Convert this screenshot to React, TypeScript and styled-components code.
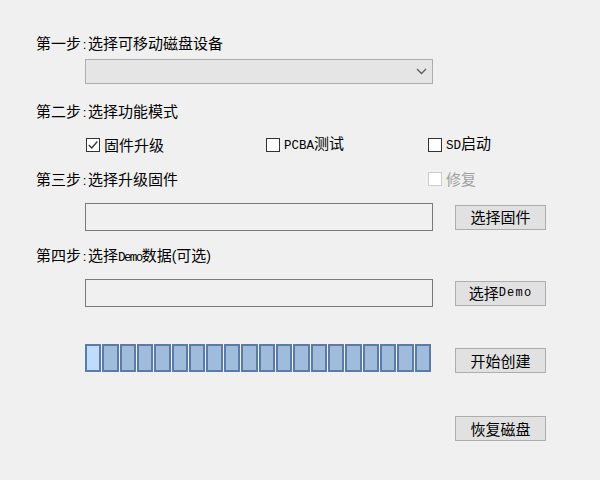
import React from "react";
import styled, { createGlobalStyle } from "styled-components";

const Global = createGlobalStyle`
  html, body { margin: 0; padding: 0; background: #f0f0f0; }
  body { width: 600px; height: 480px; overflow: hidden; }
`;

const Window = styled.div`
  width: 600px;
  height: 480px;
  box-sizing: border-box;
  padding: 35px 0 0 36px;
  display: flex;
  flex-direction: column;
  font-family: "Noto Sans CJK SC", "Noto Sans", sans-serif;
  font-size: 15px;
  line-height: 16px;
  color: #000;
  background: #f0f0f0;
`;

const Row = styled.div<{ $top: number; $indent?: number; $align?: string }>`
  display: flex;
  align-items: ${(p) => p.$align ?? "center"};
  margin-top: ${(p) => p.$top}px;
  padding-left: ${(p) => p.$indent ?? 0}px;
`;

const Label = styled.div<{ $width?: number }>`
  height: 16px;
  white-space: nowrap;
  ${(p) => (p.$width ? `width: ${p.$width}px;` : "")}
`;

const Lat = styled.span<{ $size: number; $ls?: number }>`
  font-family: "Liberation Mono", "DejaVu Sans Mono", monospace;
  font-size: ${(p) => p.$size}px;
  letter-spacing: ${(p) => p.$ls ?? 0}px;
`;

const Colon = styled.span`
  display: inline-block;
  width: 7px;
  text-align: center;
  font-family: "Liberation Sans", sans-serif;
  font-size: 13px;
`;

const Paren = styled.span`
  font-family: "Liberation Sans", sans-serif;
  font-size: 14px;
`;

const Combo = styled.div`
  width: 348px;
  height: 25px;
  box-sizing: border-box;
  border: 1px solid #adadad;
  background: #e5e5e5;
  display: flex;
  align-items: center;
  justify-content: flex-end;
  padding-right: 5px;
`;

const TextBox = styled.div`
  width: 348px;
  height: 28px;
  box-sizing: border-box;
  border: 1px solid #7a7a7a;
  background: #f0f0f0;
`;

const Button = styled.div<{ $gap?: number; $drop?: number }>`
  width: 91px;
  height: 25px;
  box-sizing: border-box;
  border: 1px solid #adadad;
  background: #e1e1e1;
  display: flex;
  align-items: center;
  justify-content: center;
  margin-left: ${(p) => p.$gap ?? 22}px;
  margin-top: ${(p) => p.$drop ?? 0}px;
  white-space: nowrap;
`;

const CheckGrid = styled.div`
  display: grid;
  grid-template-columns: 180px 162px auto;
  align-items: center;
`;

const Check = styled.div<{ $disabled?: boolean }>`
  display: flex;
  align-items: center;
  gap: 4px;
  color: ${(p) => (p.$disabled ? "#a0a0a0" : "#000")};
  white-space: nowrap;
`;

const Box = styled.div<{ $disabled?: boolean }>`
  width: 14px;
  height: 14px;
  box-sizing: border-box;
  border: 1px solid ${(p) => (p.$disabled ? "#cccccc" : "#333333")};
  background: #ffffff;
  display: flex;
  align-items: center;
  justify-content: center;
`;

const Progress = styled.div`
  width: 346px;
  height: 28px;
  display: grid;
  grid-template-columns: repeat(20, 1fr);
  column-gap: 1px;
`;

const Block = styled.div<{ $first?: boolean }>`
  box-sizing: border-box;
  border: 2px solid #5a7ca6;
  background: ${(p) => (p.$first ? "#c0dcfd" : "#a0bcdc")};
`;

const Spacer = styled.div`
  width: 348px;
`;

function CheckBox({
  checked,
  disabled,
  children,
}: {
  checked?: boolean;
  disabled?: boolean;
  children: React.ReactNode;
}) {
  return (
    <Check $disabled={disabled}>
      <Box $disabled={disabled}>
        {checked && (
          <svg width="12" height="12" viewBox="0 0 12 12">
            <path d="M1.8 6 L4.8 9 L10.3 2.5" fill="none" stroke="#333" strokeWidth="1.3" />
          </svg>
        )}
      </Box>
      <span>{children}</span>
    </Check>
  );
}

export default function App() {
  return (
    <>
      <Global />
      <Window>
        <Label>
          第一步<Colon>:</Colon>选择可移动磁盘设备
        </Label>
        <Row $top={8} $indent={49}>
          <Combo>
            <svg width="11" height="7" viewBox="0 0 11 7">
              <path d="M1 1 L5.5 5.5 L10 1" fill="none" stroke="#606060" strokeWidth="1.4" />
            </svg>
          </Combo>
        </Row>
        <Row $top={19}>
          <Label>
            第二步<Colon>:</Colon>选择功能模式
          </Label>
        </Row>
        <Row $top={16} $indent={50}>
          <CheckGrid>
            <CheckBox checked>固件升级</CheckBox>
            <CheckBox>
              <Lat $size={12.5}>PCBA</Lat>测试
            </CheckBox>
            <CheckBox>
              <Lat $size={12.5}>SD</Lat>启动
            </CheckBox>
          </CheckGrid>
        </Row>
        <Row $top={17}>
          <Label $width={392}>
            第三步<Colon>:</Colon>选择升级固件
          </Label>
          <CheckBox disabled>修复</CheckBox>
        </Row>
        <Row $top={16} $indent={49}>
          <TextBox />
          <Button>选择固件</Button>
        </Row>
        <Row $top={16}>
          <Label>
            第四步<Colon>:</Colon>选择<Lat $size={12.5} $ls={-1.6}>Demo</Lat>数据<Paren>(</Paren>可选<Paren>)</Paren>
          </Label>
        </Row>
        <Row $top={16} $indent={49}>
          <TextBox />
          <Button>
            选择<Lat $size={12} $ls={1.2}>Demo</Lat>
          </Button>
        </Row>
        <Row $top={37} $indent={49} $align="flex-start">
          <Progress>
            {Array.from({ length: 20 }).map((_, i) => (
              <Block key={i} $first={i === 0} />
            ))}
          </Progress>
          <Button $gap={24} $drop={4}>开始创建</Button>
        </Row>
        <Row $top={43} $indent={49}>
          <Spacer />
          <Button>恢复磁盘</Button>
        </Row>
      </Window>
    </>
  );
}
